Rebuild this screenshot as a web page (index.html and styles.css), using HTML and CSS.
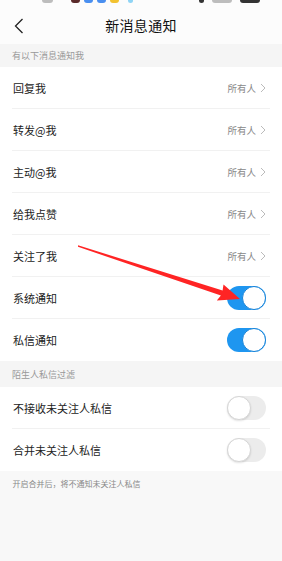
FILE: index.html
```html
<!DOCTYPE html>
<html lang="zh-CN">
<head>
<meta charset="utf-8">
<title>新消息通知</title>
<link rel="stylesheet" href="styles.css">
</head>
<body>
<div class="page">
  <div class="status">
    <div class="status-left">
      <span class="sb sb-gray"></span>
      <span class="sb sb-red"></span>
      <span class="sb sb-blue"></span>
      <span class="sb sb-blue"></span>
      <span class="sb sb-yellow"></span>
      <span class="sb sb-light"></span>
    </div>
    <div class="status-right">
      <span class="sb sb-dark sb-narrow"></span>
      <span class="sb sb-gray sb-wide"></span>
      <span class="sb sb-dark sb-wide"></span>
    </div>
  </div>

  <div class="header">
    <svg class="back" width="10" height="16" viewBox="0 0 10 16"><path d="M8.5 1 L1.5 8 L8.5 15" fill="none" stroke="#222" stroke-width="1.3"/></svg>
    <div class="title">新消息通知</div>
  </div>

  <div class="section-title s1">有以下消息通知我</div>
  <div class="list">
    <div class="row"><span class="label">回复我</span><span class="value">所有人<svg class="chev" width="6" height="10" viewBox="0 0 6 10"><path d="M1 1 L5 5 L1 9" fill="none" stroke="#bbb" stroke-width="1"/></svg></span></div>
    <div class="row"><span class="label">转发@我</span><span class="value">所有人<svg class="chev" width="6" height="10" viewBox="0 0 6 10"><path d="M1 1 L5 5 L1 9" fill="none" stroke="#bbb" stroke-width="1"/></svg></span></div>
    <div class="row"><span class="label">主动@我</span><span class="value">所有人<svg class="chev" width="6" height="10" viewBox="0 0 6 10"><path d="M1 1 L5 5 L1 9" fill="none" stroke="#bbb" stroke-width="1"/></svg></span></div>
    <div class="row"><span class="label">给我点赞</span><span class="value">所有人<svg class="chev" width="6" height="10" viewBox="0 0 6 10"><path d="M1 1 L5 5 L1 9" fill="none" stroke="#bbb" stroke-width="1"/></svg></span></div>
    <div class="row"><span class="label">关注了我</span><span class="value">所有人<svg class="chev" width="6" height="10" viewBox="0 0 6 10"><path d="M1 1 L5 5 L1 9" fill="none" stroke="#bbb" stroke-width="1"/></svg></span></div>
    <div class="row"><span class="label">系统通知</span><span class="toggle on"><span class="knob"></span></span></div>
    <div class="row"><span class="label">私信通知</span><span class="toggle on"><span class="knob"></span></span></div>
  </div>

  <div class="section-title s2">陌生人私信过滤</div>
  <div class="list">
    <div class="row"><span class="label">不接收未关注人私信</span><span class="toggle"><span class="knob"></span></span></div>
    <div class="row"><span class="label">合并未关注人私信</span><span class="toggle"><span class="knob"></span></span></div>
  </div>

  <div class="footer">开启合并后，将不通知未关注人私信</div>

  <svg class="arrow" width="282" height="561" viewBox="0 0 282 561">
    <polygon points="78,245.3 222.6,290.4 223.5,284.6 240,299 216.8,300.6 220.9,295.6 78,246.8" fill="#ff2424"/>
  </svg>
</div>
</body>
</html>
```

FILE: styles.css
```css
* { box-sizing: border-box; }
html, body { margin: 0; padding: 0; }
body {
  background: #f8f8f8;
  font-family: "Noto Sans CJK SC", "Noto Sans", sans-serif;
  color: #222;
}
.page {
  position: relative;
  width: 282px;
  height: 561px;
  overflow: hidden;
  background: #f8f8f8;
}
.status {
  height: 5px;
  background: #fcfcfc;
  display: flex;
  justify-content: space-between;
  padding: 0 22px 0 42px;
}
.status-left, .status-right {
  display: flex;
  gap: 4px;
  align-items: flex-start;
}
.status-right { gap: 8px; }
.sb {
  display: block;
  width: 9px;
  height: 3px;
  border-radius: 0 0 3px 3px;
}
.sb-gray { background: #bdbdbd; width: 11px; }
.sb-red { background: #5a2a2a; margin-left: 14px; }
.sb-blue { background: #4a8ff0; }
.sb-yellow { background: #f2c230; }
.sb-light { background: #8fd4f5; width: 5px; margin-left: 5px; }
.sb-dark { background: #333; }
.sb-narrow { width: 5px; }
.sb-wide { width: 20px; }

.header {
  height: 39px;
  background: #fcfcfc;
  display: flex;
  align-items: center;
  justify-content: center;
  position: relative;
}
.back {
  position: absolute;
  left: 14px;
  top: 13px;
}
.title {
  font-size: 14px;
  line-height: 20px;
  color: #111;
  letter-spacing: 0.3px;
}
.section-title {
  font-size: 9px;
  color: #999;
  padding-left: 12px;
  background: #f5f5f5;
  display: flex;
  align-items: center;
}
.s1 { height: 23px; }
.s2 { height: 26px; }
.list {
  background: #fff;
}
.row {
  height: 42px;
  margin: 0 12px;
  padding: 0 4px 0 1px;
  border-bottom: 1px solid #f1f1f1;
  display: flex;
  align-items: center;
  justify-content: space-between;
}
.row:last-child { border-bottom: none; }
.label {
  font-size: 11px;
  color: #222;
}
.value {
  font-size: 9.5px;
  color: #888;
  display: flex;
  align-items: center;
  gap: 4px;
}
.chev { display: block; }
.toggle {
  width: 39px;
  height: 24px;
  border-radius: 12px;
  background: #ececec;
  position: relative;
  display: block;
}
.toggle .knob {
  position: absolute;
  top: 0;
  left: 0;
  width: 24px;
  height: 24px;
  border-radius: 50%;
  background: #fff;
  border: 1px solid #d6d6d6;
  box-shadow: 0 1px 2px rgba(0,0,0,0.12);
}
.toggle.on { background: #1e96f0; }
.toggle.on .knob {
  left: auto;
  right: 0;
  border: 1px solid #1582d8;
  box-shadow: none;
}
.footer {
  font-size: 8px;
  color: #888;
  padding: 7px 0 0 12.5px;
}
.arrow {
  position: absolute;
  left: 0;
  top: 0;
  pointer-events: none;
}
```
